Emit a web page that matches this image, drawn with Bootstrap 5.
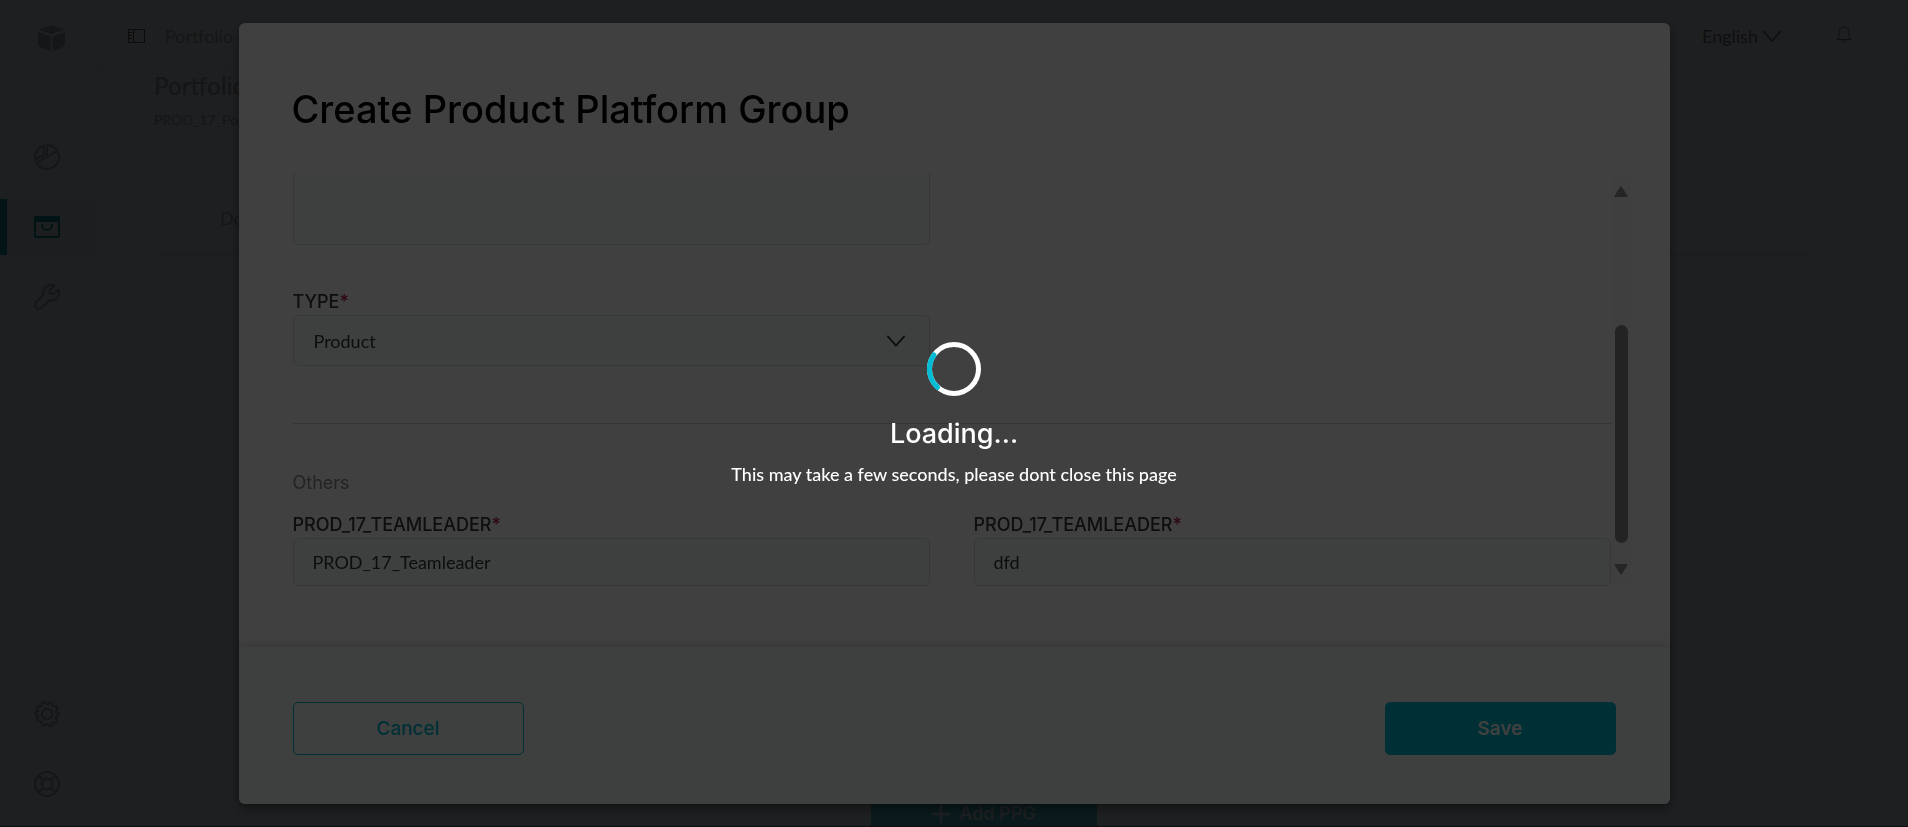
<!DOCTYPE html>
<html lang="en">
<head>
<meta charset="utf-8">
<meta name="viewport" content="width=device-width, initial-scale=1">
<title>Create Product Platform Group</title>
<link href="https://cdn.jsdelivr.net/npm/bootstrap@5.3.0/dist/css/bootstrap.min.css" rel="stylesheet">
<style>
  :root { --display: Inter, "Open Sans", sans-serif; --teal: #00bcd4; }
  body { font-family: Lato, "Open Sans", sans-serif; font-size: 18px; line-height: 24px; background: #787c82; color: #54585c; }
  svg { display: block; }
  .display-face { font-family: var(--display); }

  /* page under the dialog */
  .app-shell { height: 100vh; border-bottom: 1px solid #303030; }
  .side-rail { width: 97px; border-right: 1px solid #72767c; padding-bottom: 14px; }
  .side-rail a { color: #54585c; height: 56px; margin-bottom: 14px; padding-left: 34px; border-left: 0 solid #08505a; }
  .side-rail .brand-mark { height: 76px; margin-bottom: 53px; padding-left: 38px; }
  .side-rail a.current { color: #084c54; background: #70787c; border-left-width: 7px; padding-left: 27px; }
  .top-strip { height: 72px; border-bottom: 1px solid #72767c; padding: 12px 57px 11px 31px; }
  .top-strip a, .lang-pick { color: #54585c; text-decoration: none; }
  .lang-pick { border: 1px solid #72767c; border-radius: 6px; background: none; width: 125px; padding: 0 23px 0 20px; color: #3c3f44; margin-right: 31px; }
  .page-area { padding: 0 95px 0 57px; }
  .page-area h1 { font-size: 24px; line-height: 28px; font-weight: 600; margin: 0 0 8px; }
  .page-area .ref-code { font-size: 14px; line-height: 24px; margin-bottom: 74px; }
  .page-area .tab-row { padding: 0 66px 24px; border-bottom: 1px solid #6c7076; }
  .tab-row a { color: #54585c; text-decoration: none; }
  .add-btn { width: 226px; height: 50px; background: #28666e; color: #74787e; font-weight: 600; border: 0; border-radius: 4px 4px 0 0; margin-bottom: -13px; }

  /* dialog */
  .dialog-layer { padding: 23px 0; }
  .dialog-box { width: 75%; background: #fff; border-radius: 6px; box-shadow: 0 4px 12px rgba(0,0,0,.45); }
  .dialog-box h2 { font-size: 38px; line-height: 44px; font-weight: 500; color: #000; margin: 0; padding: 64px 53px 42px; }
  .dialog-main { margin: 0 39px 61px 54px; }
  .form-view { padding-right: 1px; }
  .form-view .pair { display: grid; grid-template-columns: 1fr 1fr; column-gap: 44px; }
  .field-label { font-family: var(--display); font-size: 18px; line-height: 24px; font-weight: 500; color: #34383a; margin-bottom: 1px; }
  .field-label span { color: #b4204c; }
  .field-box, .field-box:focus { background-color: #f8fcfa; border: 1px solid #d8dede; border-radius: 5px; color: #303436; font-size: 18px; line-height: 24px; padding: 11px 19px; }
  textarea.field-box { height: 120px; flex-shrink: 0; resize: none; }
  select.field-box { height: 51px; padding-left: 20px; background-size: 20px 20px; background-position: right 23px center;
    background-image: url("data:image/svg+xml,%3csvg xmlns='http://www.w3.org/2000/svg' viewBox='0 0 22 22'%3e%3cpath d='M2 6l9 10 9-10' fill='none' stroke='%23303436' stroke-width='2' stroke-linecap='round' stroke-linejoin='round'/%3e%3c/svg%3e"); }
  input.field-box { height: 48px; }
  .type-group { margin: 45px 0 57px; }
  .form-view hr { margin: 0 0 47px; border-color: #ccd4d4; opacity: 1; }
  .group-name { font-family: var(--display); font-size: 18px; line-height: 24px; color: #8c8c8c; margin-bottom: 18px; }
  .scroll-rail { width: 19px; background: #fcfcfc; padding: 13px 0 11px; color: #929292; }
  .scroll-thumb { width: 13px; border-radius: 7px; background: #8c8c8c; flex: 0 0 56%; margin-top: auto; margin-bottom: 21px; }
  .dialog-foot { background: #f8fcfa; padding: 55px 54px 49px 54px; border-radius: 0 0 6px 6px; box-shadow: 0 -3px 8px rgba(0,0,0,.12); }
  .dialog-foot button { width: 231px; height: 53px; border: 1px solid var(--teal); border-radius: 5px; color: var(--teal); font-size: 19px; font-weight: 500; }
  .dialog-foot .cancel-btn { background: none; }
  .dialog-foot .save-btn { background: var(--teal); color: #fff; font-weight: 600; }

  /* loading layer */
  .busy-layer { background: rgba(0,0,0,.75); color: #fff; }
  .busy-layer .busy-title { font-size: 27px; line-height: 36px; font-weight: 500; margin: 20px 0 10px; }
  .busy-layer p { font-weight: 500; font-size: 18px; line-height: 24px; margin: 0; }
</style>
</head>
<body class="overflow-hidden">

<div class="app-shell d-flex overflow-hidden">
  <nav class="side-rail d-flex flex-column flex-shrink-0" aria-label="Main">
    <a href="#" class="brand-mark d-flex align-items-center" aria-label="Home">
      <svg width="27" height="26" viewBox="0 0 27 26" fill="currentColor"><path d="M13.500 0L26 4.500 13.500 9 1 4.500zM0 7l12.500 4.500V26L3 22.500Q0 21 0 19zM27 7l-12.500 4.500V26L24 22.500q3-1.500 3-3.500z"/></svg>
    </a>
    <a href="#" class="d-flex align-items-center" aria-label="Reports">
      <svg width="26" height="26" viewBox="0 0 26 26" fill="none" stroke="currentColor" stroke-width="2"><path d="M13 13V1a12 12 0 1 1-10.500 17.800L24 6.500M10 1.500v9.500L1 15.500C.5 8 4 3.500 10 1.500z" stroke-linejoin="round"/></svg>
    </a>
    <a href="#" class="current d-flex align-items-center" aria-label="Portfolio">
      <svg width="26" height="22" viewBox="0 0 26 22" fill="none" stroke="currentColor" stroke-width="2"><rect x="1" y="1" width="24" height="20" rx="1.500"/><path d="M1 1h24v4H1z" fill="currentColor"/><path d="M8 9a5 5 0 0 0 10 0" stroke-linecap="round"/></svg>
    </a>
    <a href="#" class="d-flex align-items-center" aria-label="Tools">
      <svg width="26" height="26" viewBox="0 0 26 26" fill="none" stroke="currentColor" stroke-width="2" stroke-linejoin="round"><path d="M20.500 1.700C14-.5 8 4 9.500 10.500L1.800 18.500c-2.500 3.500 2.200 8 5.500 5.500l8-7.800C22 18 27 11.500 24.300 5.500L19.500 10l-3.500-.5-.5-3.500z"/></svg>
    </a>
    <a href="#" class="mt-auto d-flex align-items-center" aria-label="Settings">
      <svg width="26" height="26" viewBox="0 0 26 26" fill="none" stroke="currentColor" stroke-width="2" stroke-linejoin="round"><circle cx="13" cy="13" r="5.200"/><path d="M9.500 1.300Q11.200.8 12 3h2q.8-2.200 2.500-1.700 1.900.6 1.600 2.900l1.500 1.200q2.200-.9 3.200.9.900 1.700-.9 3.200l.4 1.900q2.300.4 2.300 2.100t-2.300 2.100l-.4 1.800q1.800 1.500.9 3.200-1 1.800-3.200.9l-1.500 1.300q.3 2.200-1.600 2.800Q14.800 25.200 14 23h-2q-.8 2.200-2.500 1.600-1.900-.6-1.600-2.800l-1.500-1.300q-2.200.9-3.200-.9-.9-1.700.9-3.200l-.4-1.800Q1.400 14.200 1.400 12.500t2.300-2.100l.4-1Q2.300 8 3.200 6.300q1-1.800 3.200-.9l1.500-1.200q-.3-2.300 1.600-2.900z"/></svg>
    </a>
    <a href="#" class="mb-0 d-flex align-items-center" aria-label="Help">
      <svg width="26" height="26" viewBox="0 0 26 26" fill="none" stroke="currentColor" stroke-width="2"><circle cx="13" cy="13" r="12"/><circle cx="13" cy="13" r="5.500"/><path d="M4.500 4.500l4.600 4.600M21.500 4.500l-4.600 4.600M4.500 21.500l4.600-4.600M21.500 21.500l-4.600-4.600"/></svg>
    </a>
  </nav>

  <div class="flex-grow-1 d-flex flex-column">
    <header class="top-strip d-flex align-items-center">
      <a href="#" class="me-3 pe-1" aria-label="Toggle menu">
        <svg width="17" height="14" viewBox="0 0 17 14" fill="none" stroke="#2c2f33"><path d="M.5.5h16v13H.5zM5.500.5v13M1 3.500h3M1 6.500h3M1 9.500h3"/></svg>
      </a>
      <a href="#">Portfolio</a>
      <button type="button" class="lang-pick ms-auto align-self-stretch d-flex align-items-center justify-content-between">English
        <svg width="20" height="12" viewBox="0 0 20 12" fill="none" stroke="currentColor" stroke-width="1.800"><path d="M1 1l9 10 9-10"/></svg>
      </button>
      <a href="#" aria-label="Notifications" class="pb-1">
        <svg width="14" height="17" viewBox="0 0 14 17" fill="none" stroke="#3c3f44"><path d="M.5 13.500l1.500-3V6a5 5 0 0 1 10 0v4.500l1.500 3zM4.500 13.500c0 3.500 5 3.500 5 0"/></svg>
      </a>
    </header>
    <main class="page-area flex-grow-1 d-flex flex-column">
      <h1>Portfolio</h1>
      <div class="ref-code">PROD_17_Portfolio</div>
      <div class="tab-row"><a href="#">Documents</a></div>
      <button type="button" class="add-btn display-face mt-auto mx-auto flex-shrink-0 d-flex align-items-center justify-content-center gap-2">
        <svg width="20" height="20" viewBox="0 0 20 20" stroke="currentColor" stroke-width="2.500"><path d="M10 1v18M1 10h18"/></svg>Add PPG
      </button>
    </main>
  </div>
</div>

<div class="dialog-layer position-fixed top-0 start-0 w-100 h-100 d-flex justify-content-center">
  <form class="dialog-box d-flex flex-column" role="dialog" aria-labelledby="dlg-title">
    <h2 id="dlg-title" class="display-face">Create Product Platform Group</h2>
    <div class="dialog-main d-flex flex-grow-1 overflow-hidden">
      <div class="form-view flex-grow-1 d-flex flex-column justify-content-end overflow-hidden">
        <div class="pair"><textarea class="form-control field-box" aria-label="Description"></textarea></div>
        <div class="pair type-group">
          <div>
            <label class="field-label d-block" for="f-type">TYPE<span>*</span></label>
            <select id="f-type" class="form-select field-box"><option>Product</option></select>
          </div>
        </div>
        <hr>
        <div class="group-name">Others</div>
        <div class="pair">
          <div>
            <label class="field-label d-block" for="f-lead1">PROD_17_TEAMLEADER<span>*</span></label>
            <input id="f-lead1" type="text" class="form-control field-box" value="PROD_17_Teamleader">
          </div>
          <div>
            <label class="field-label d-block" for="f-lead2">PROD_17_TEAMLEADER<span>*</span></label>
            <input id="f-lead2" type="text" class="form-control field-box" value="dfd">
          </div>
        </div>
      </div>
      <div class="scroll-rail flex-shrink-0 d-flex flex-column align-items-center" aria-hidden="true">
        <svg width="14" height="11" viewBox="0 0 14 11" fill="currentColor" stroke="currentColor" stroke-linejoin="round" stroke-width="2"><path d="M7 1.500L12.500 10h-11z"/></svg>
        <div class="scroll-thumb"></div>
        <svg width="14" height="11" viewBox="0 0 14 11" fill="currentColor" stroke="currentColor" stroke-linejoin="round" stroke-width="2"><path d="M7 9.500L12.500 1h-11z"/></svg>
      </div>
    </div>
    <div class="dialog-foot d-flex justify-content-between">
      <button type="button" class="cancel-btn display-face">Cancel</button>
      <button type="submit" class="save-btn display-face">Save</button>
    </div>
  </form>
</div>

<div class="busy-layer position-fixed top-0 start-0 w-100 h-100 d-flex flex-column align-items-center justify-content-center" role="status">
  <svg width="54" height="54" viewBox="0 0 54 54" fill="none" stroke-width="5"><circle cx="27" cy="27" r="24.500" stroke="#fff"/><path d="M7 13A24.500 24.500 0 0 0 10.500 45.300" stroke="#00bcd4" stroke-linecap="round"/></svg>
  <div class="busy-title display-face">Loading...</div>
  <p>This may take a few seconds, please dont close this page</p>
</div>

<script src="https://cdn.jsdelivr.net/npm/bootstrap@5.3.0/dist/js/bootstrap.bundle.min.js"></script>
</body>
</html>
